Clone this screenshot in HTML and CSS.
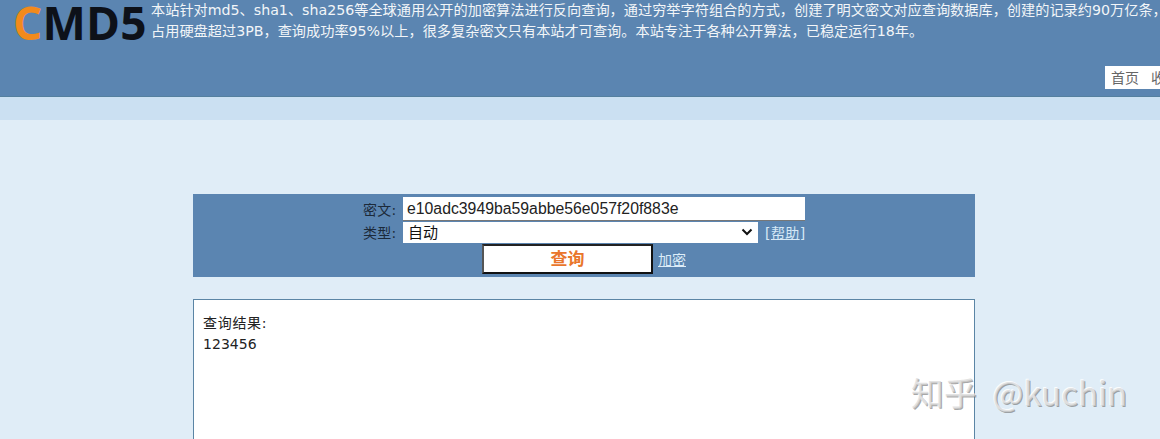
FILE: index.html
```html
<!DOCTYPE html>
<html lang="zh">
<head>
<meta charset="utf-8">
<title>CMD5</title>
<link rel="stylesheet" href="styles.css">
</head>
<body>
<header class="top">
  <div class="intro">
    <div class="logo"><span class="logo-c">C</span>MD5</div>
    <p class="desc">本站针对md5、sha1、sha256等全球通用公开的加密算法进行反向查询，通过穷举字符组合的方式，创建了明文密文对应查询数据库，创建的记录约90万亿条，<br>占用硬盘超过3PB，查询成功率95%以上，很多复杂密文只有本站才可查询。本站专注于各种公开算法，已稳定运行18年。</p>
  </div>
  <nav class="menu"><a>首页</a><a>收</a></nav>
</header>
<div class="band"></div>
<main class="content">
  <form class="query">
    <div class="row">
      <label class="lbl">密文:</label>
      <input class="cipher" type="text" value="e10adc3949ba59abbe56e057f20f883e">
    </div>
    <div class="row row-type">
      <label class="lbl">类型:</label>
      <select class="type"><option>自动</option></select>
      <a class="help">[<u>帮助</u>]</a>
    </div>
    <div class="row actions">
      <button class="submit" type="button">查询</button>
      <a class="encrypt">加密</a>
    </div>
  </form>
  <section class="result">
    <div class="result-title">查询结果:</div>
    <div class="result-value">123456</div>
  </section>
</main>
<div class="watermark">知乎 @kuchin</div>
</body>
</html>
```
FILE: styles.css
```css
* { box-sizing: border-box; }
html, body { margin: 0; height: 439px; overflow: hidden; }
body {
  position: relative;
  background: #e0edf7;
  font-family: "DejaVu Sans", "Noto Sans CJK SC", sans-serif;
  font-size: 14px;
  color: #222;
}
.top {
  height: 97px;
  background: #5b85b1;
  border-bottom: 1px solid #55809f;
  display: flex;
  flex-direction: column;
  justify-content: space-between;
  padding-bottom: 7px;
}
.intro { display: flex; gap: 5px; padding: 0 0 0 13px; white-space: nowrap; }
.logo {
  flex: none;
  font-family: "Open Sans", sans-serif;
  font-weight: 700;
  font-size: 46px;
  line-height: 46px;
  letter-spacing: 0.2px;
  color: #0d1119;
  width: 133px;
  margin-top: -1px;
}
.logo-c { color: #f28a1c; }
.desc {
  margin: 0;
  color: #f2f5f8;
  font-size: 14.2px;
  line-height: 21px;
}
.menu {
  align-self: flex-end;
  width: 55px;
  height: 23px;
  background: #fff;
  display: flex;
  gap: 12px;
  padding-left: 6px;
  line-height: 24px;
  color: #666;
  white-space: nowrap;
  overflow: hidden;
}
.band { height: 23px; background: #cbe0f2; }
.content { padding: 74px 185px 0 193px; }
.query {
  background: #5b85b1;
  height: 83px;
  padding-top: 3px;
  display: flex;
  flex-direction: column;
  align-items: flex-start;
}
.row { display: flex; align-items: center; height: 24px; padding-left: 170px; }
.row-type { height: 22px; }
.lbl { width: 34px; margin-right: 6px; color: #1c2a3a; white-space: nowrap; letter-spacing: .2px; }
.cipher {
  width: 402px;
  height: 24px;
  border: 0;
  padding: 0 4px;
  background: #fff;
  font-family: "Liberation Sans", sans-serif;
  font-size: 15.8px;
  color: #222;
  border-bottom: 1px solid #777;
}
.type {
  width: 355px;
  height: 21px;
  border: 0;
  background-color: #fff;
  background-image: url("data:image/svg+xml,%3Csvg xmlns='http://www.w3.org/2000/svg' width='12' height='8'%3E%3Cpath d='M1.5 1.5 6 6l4.5-4.5' fill='none' stroke='%23111' stroke-width='2'/%3E%3C/svg%3E");
  background-repeat: no-repeat;
  background-position: right 5px center;
  appearance: none;
  font-family: "Liberation Sans", "Noto Sans CJK SC", sans-serif;
  font-size: 15px;
  color: #111;
  padding-left: 5px;
}
.help { margin-left: 7px; color: #d5e8f6; font-size: 14px; letter-spacing: .4px; }
.actions { height: 31px; padding-left: 289px; gap: 5px; }
.submit {
  width: 171px;
  height: 30px;
  border: 2px solid #111;
  border-top-color: #222;
  border-left-color: #555;
  background: #fff;
  color: #e9762b;
  font-family: "Noto Sans CJK SC", sans-serif;
  font-size: 17px;
  line-height: 22px;
  padding: 0 0 2px;
  font-weight: 700;
}
.encrypt { color: #dcecf8; font-size: 14px; text-decoration: underline; }
.result {
  margin-top: 22px;
  height: 160px;
  background: #fff;
  border: 1px solid #5b85a5;
  padding: 13px 9px;
  line-height: 21px;
  color: #222;
}
.result-title { letter-spacing: .7px; }
.result-value { font-size: 14px; letter-spacing: .05px; }
.watermark {
  position: absolute;
  left: 911px;
  top: 372px;
  font-family: "Noto Sans CJK SC", sans-serif;
  font-size: 33px;
  line-height: 40px;
  word-spacing: 8px;
  color: rgba(215,215,215,.7);
  text-shadow: -1px -1px 0 rgba(255,255,255,.85), 1px 1px 0 rgba(110,110,110,.6);
  white-space: nowrap;
}
```
